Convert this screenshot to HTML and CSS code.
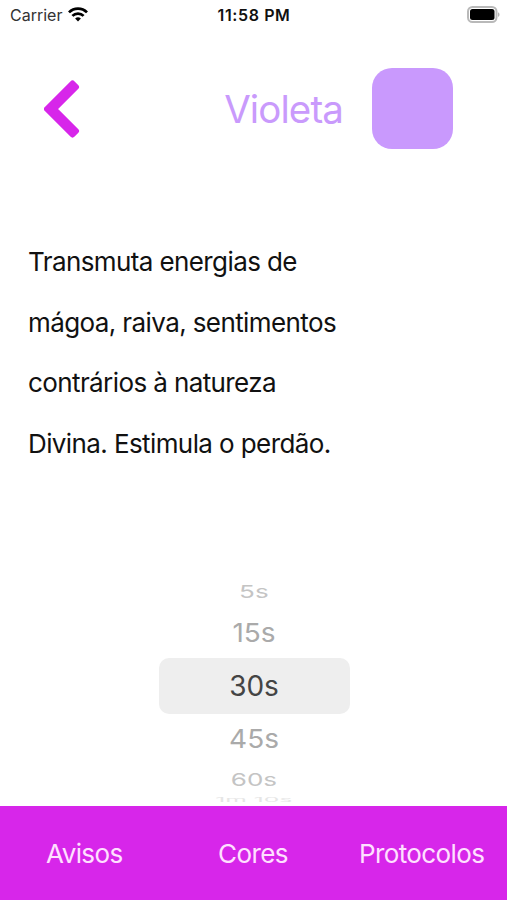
FILE: index.html
```html
<!DOCTYPE html>
<html lang="pt-BR">
<head>
    <meta charset="UTF-8">
    <meta name="viewport" content="width=device-width, initial-scale=1.0">
    <title>Violeta</title>
    <link rel="stylesheet" href="styles.css">
</head>
<body>
    <div class="app">
        <div class="status-bar">
            <div class="carrier">
                <span>Carrier</span>
                <svg class="wifi" viewBox="0 0 20 15" fill="none" stroke="#000" stroke-width="2.7">
                    <path d="M1 5.4a12.6 12.6 0 0 1 18 0"/>
                    <path d="M4.4 8.9a7.8 7.8 0 0 1 11.2 0"/>
                    <path d="M10 14.6l-2.9-3a4.1 4.1 0 0 1 5.8 0z" fill="#000" stroke="none"/>
                </svg>
            </div>
            <span class="clock">11:58 PM</span>
            <svg class="battery" viewBox="0 0 33 17">
                <rect x="1" y="1" width="28.5" height="15" rx="4.5" fill="#fff" stroke="#b9b9b9" stroke-width="2"/>
                <rect x="3" y="3" width="24.5" height="11" rx="2.5" fill="#000"/>
                <path d="M31 6.2c2 .8 2 3.8 0 4.6z" fill="#b5b5b5"/>
            </svg>
        </div>

        <header class="header">
            <button class="back-button" aria-label="Voltar">
                <svg viewBox="0 0 36 58" fill="#d726ea" stroke="#d726ea" stroke-width="6" stroke-linejoin="round">
                    <path d="M28.5 3.5 3 29 28.5 54.5 32 51 10 29 32 7z"/>
                </svg>
            </button>
            <h1>Violeta</h1>
            <div class="color-box"></div>
        </header>

        <p class="description">
            Transmuta energias de<br>
            mágoa, raiva, sentimentos<br>
            contrários à natureza<br>
            Divina. Estimula o perdão.
        </p>

        <div class="picker">
            <div class="picker-item far"><span>5s</span></div>
            <div class="picker-item near"><span>15s</span></div>
            <div class="picker-item selected"><span>30s</span></div>
            <div class="picker-item near"><span>45s</span></div>
            <div class="picker-item far"><span>60s</span></div>
            <div class="picker-item edge"><span>1m 10s</span></div>
        </div>

        <nav class="tab-bar">
            <a>Avisos</a>
            <a>Cores</a>
            <a>Protocolos</a>
        </nav>
    </div>
</body>
</html>
```
FILE: styles.css
```css
body, html {
    margin: 0;
    padding: 0;
    height: 100%;
    font-family: Inter, sans-serif;
    background-color: #fff;
    color: #111;
}
.app {
    display: flex;
    flex-direction: column;
    height: 900px;
    overflow: hidden;
}
.status-bar {
    display: grid;
    grid-template-columns: 1fr auto 1fr;
    align-items: center;
    height: 29px;
    padding: 0 7px 0 10px;
    box-sizing: border-box;
}
.carrier {
    display: flex;
    align-items: center;
    gap: 6px;
    font-size: 16px;
    color: #333;
}
.wifi {
    width: 20px;
    height: 15px;
}
.clock {
    margin-right: 2px;
    font-size: 16px;
    font-weight: 600;
    letter-spacing: 0.6px;
}
.battery {
    width: 33px;
    height: 17px;
    justify-self: end;
}
.header {
    display: flex;
    align-items: center;
    height: 81px;
    margin-top: 39px;
    padding: 0 54px 0 44px;
}
.back-button {
    display: flex;
    padding: 0;
    border: none;
    background: none;
    cursor: pointer;
}
.back-button svg {
    width: 36px;
    height: 58px;
}
.header h1 {
    margin: 0 29px 0 auto;
    font-size: 38.5px;
    font-weight: 400;
    letter-spacing: -0.9px;
    color: #c99afc;
}
.color-box {
    width: 81px;
    height: 81px;
    border-radius: 20px;
    background-color: #c999fd;
}
.description {
    margin: 83px 0 0 28px;
    font-size: 26px;
    line-height: 60.6px;
    letter-spacing: -0.6px;
    white-space: nowrap;
}
.picker {
    display: flex;
    flex-direction: column;
    align-items: center;
    flex: 1;
    min-height: 0;
    margin-top: 101.6px;
    padding-left: 1px;
    overflow: hidden;
    font-size: 28px;
}
.picker-item {
    display: flex;
    align-items: center;
    justify-content: center;
    flex-shrink: 0;
    width: 191px;
}
.near {
    height: 50px;
    color: #aaa;
}
.near span {
    transform: scaleY(0.93);
}
.far {
    height: 32px;
    color: #c4c4c4;
}
.far span {
    transform: scale(0.93, 0.63);
}
.edge {
    height: 8px;
    line-height: 28px;
    color: #e6e6e6;
}
.edge span {
    transform: scale(0.88, 0.22);
}
.selected {
    height: 56px;
    border-radius: 10px;
    background-color: #eee;
    color: #444;
}
.tab-bar {
    display: grid;
    grid-template-columns: repeat(3, 1fr);
    align-items: center;
    height: 94px;
    padding-right: 1px;
    box-sizing: border-box;
    background-color: #d726ea;
    color: #ffe0ff;
    font-size: 26px;
    letter-spacing: -0.6px;
    text-align: center;
}
```
